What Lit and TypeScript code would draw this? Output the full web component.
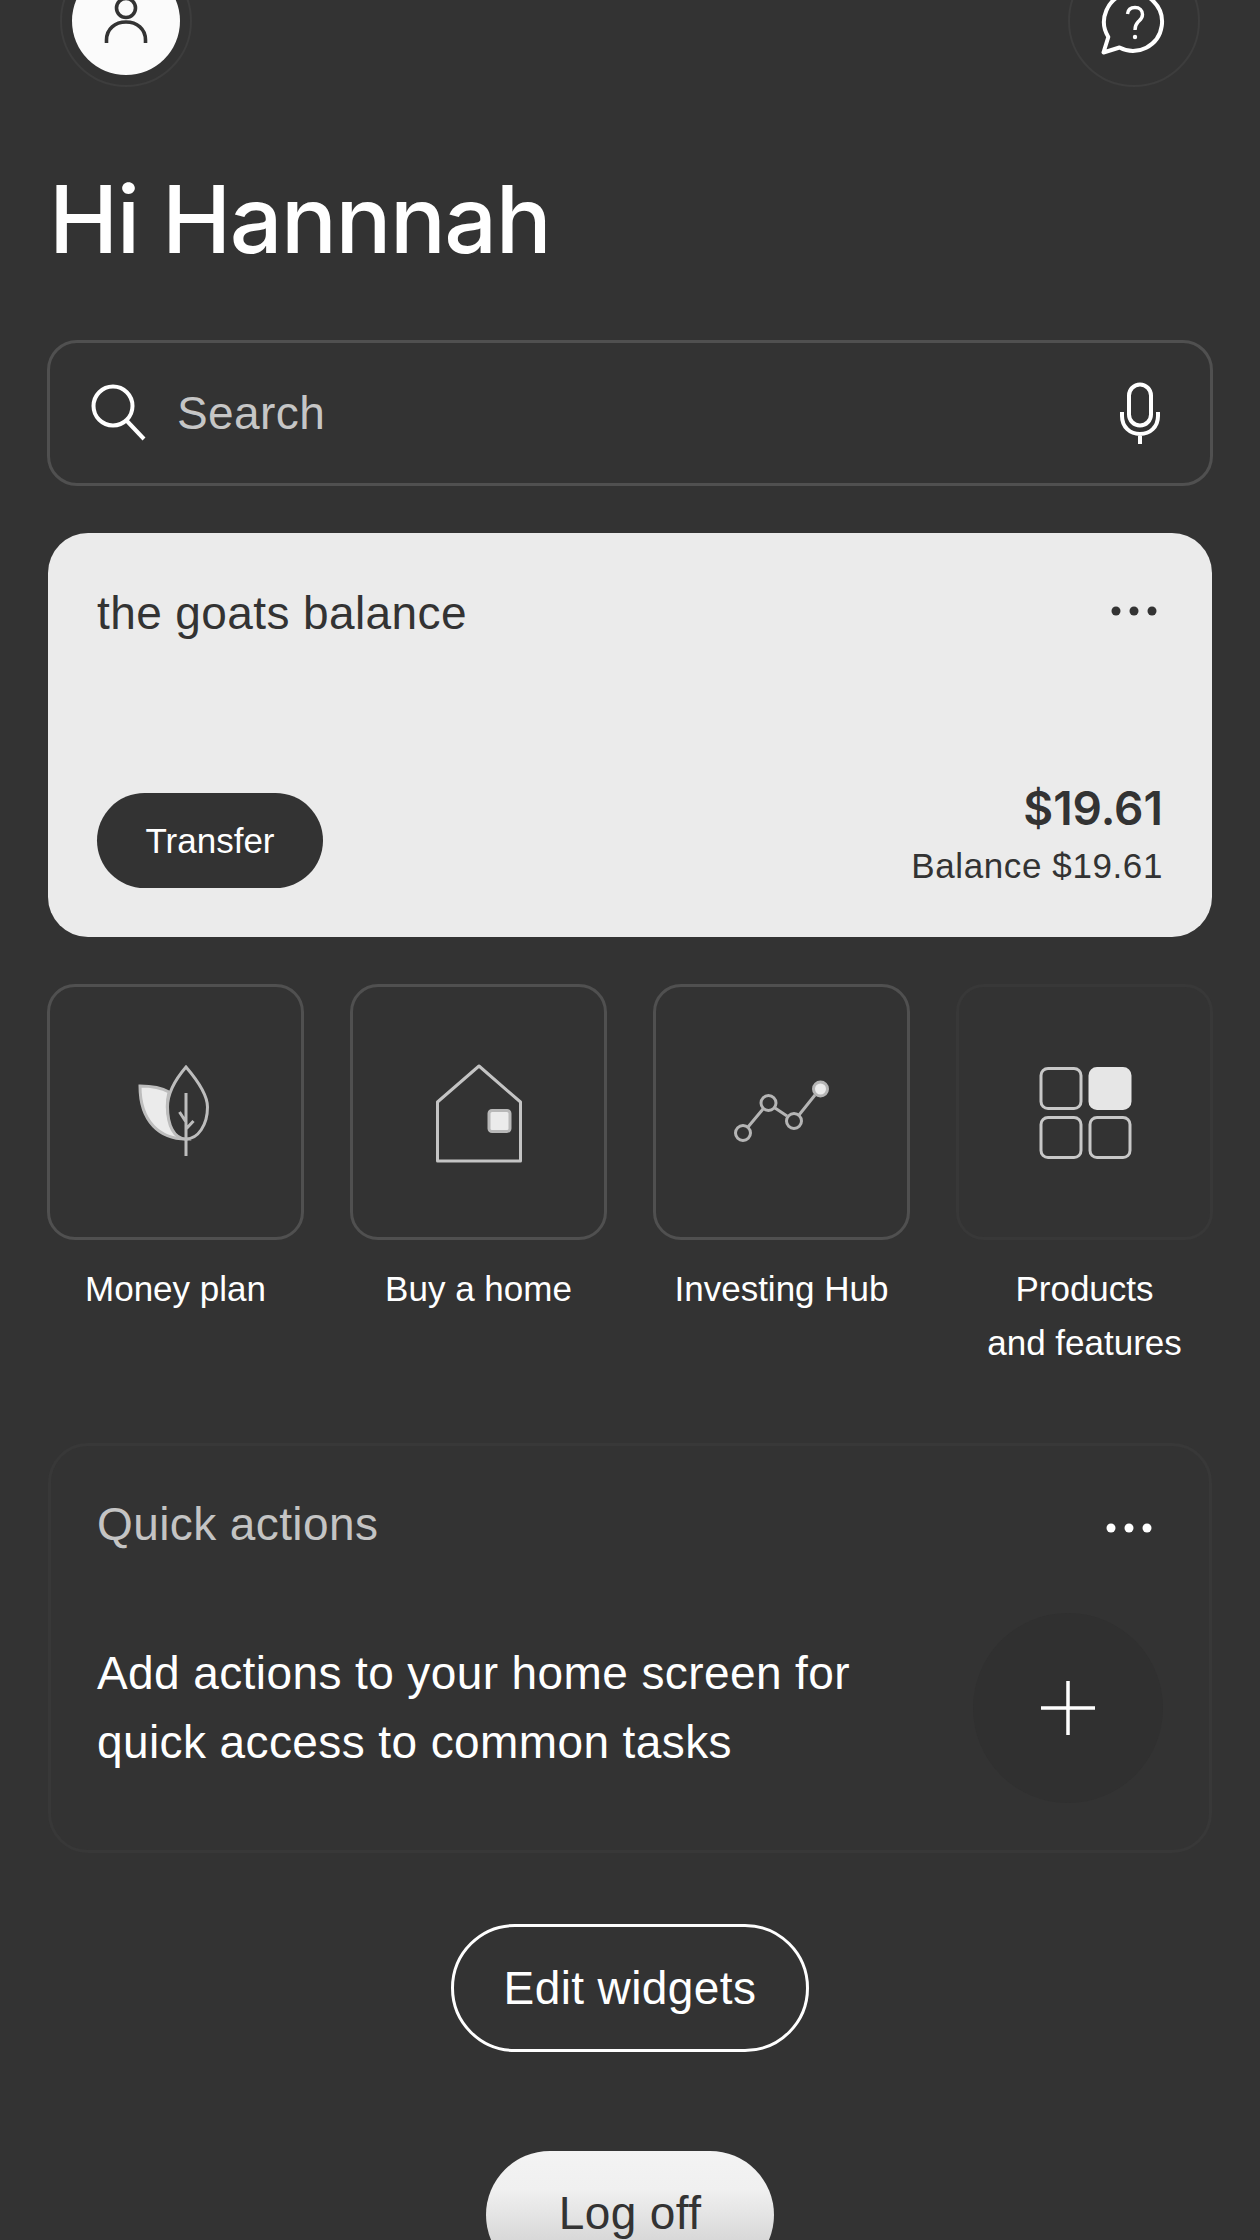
import { LitElement, html, css } from "lit";
import { customElement } from "lit/decorators.js";

const personIcon = html`<svg width="54" height="54" viewBox="0 0 54 54" fill="none" stroke="#333" stroke-width="3.6">
  <circle cx="27" cy="14" r="9.5"></circle>
  <path d="M7.5 49V46C7.5 35 16 28 27 28C38 28 46.5 35 46.5 46V49"></path>
</svg>`;

const helpIcon = html`<svg width="80" height="80" viewBox="0 0 80 80" fill="none" stroke="#fff" stroke-width="4" stroke-linejoin="round">
  <path d="M14.3 56A29 29 0 1 1 25.5 66.5L9.5 71.5Z"></path>
  <path stroke-width="3.4" d="M33.5 33C34 28.5 37 26.5 41 26.5C45.5 26.5 48.5 29.5 48.5 33.5C48.5 37.5 46 39 44 41C42 43 41 44.5 41 49"></path>
  <circle cx="41" cy="56" r="2.2" fill="#fff" stroke="none"></circle>
</svg>`;

const searchIcon = html`<svg class="search-icon" width="60" height="60" viewBox="0 0 60 60" fill="none" stroke="#fff" stroke-width="4">
  <circle cx="24" cy="23" r="19.5"></circle>
  <path d="M37 37L55 56"></path>
</svg>`;

const micIcon = html`<svg width="50" height="70" viewBox="0 0 50 70" fill="none" stroke="#fff" stroke-width="4">
  <rect x="14" y="6.5" width="22" height="41" rx="11"></rect>
  <path d="M7 34V38C7 49 15 56 25 56C35 56 43 49 43 38V34M25 56V66"></path>
</svg>`;

const leafIcon = html`<svg width="100" height="100" viewBox="0 0 100 100" fill="none" stroke="#bdbdbd" stroke-width="3">
  <path fill="#ebebeb" d="M14 24C26 24 36 26 43 30C38 50 44 68 60 77C34 77 14 60 14 24Z"></path>
  <path fill="#333" d="M60 5C72 19 81.5 33 81.5 45C81.5 63 72 77 60 77C48 77 41.5 63 41.5 45C41.5 33 48 19 60 5Z"></path>
  <path d="M60 31V94M53.5 50L60 60M67.5 59L60 67"></path>
</svg>`;

const houseIcon = html`<svg width="110" height="110" viewBox="0 0 110 110" fill="none" stroke="#c4c4c4" stroke-width="3" stroke-linejoin="round">
  <path d="M55 9L13.5 45V104H96.5V45Z"></path>
  <rect x="65" y="53.5" width="21" height="21" rx="3" fill="#ebebeb" stroke="#b8b8b8"></rect>
</svg>`;

const chartIcon = html`<svg width="110" height="110" viewBox="0 0 110 110" fill="none" stroke="#b5b5b5" stroke-width="3">
  <path d="M21 70L36 52M48 51L60 59M72 58L88 38"></path>
  <circle cx="16" cy="76" r="7.5"></circle>
  <circle cx="41.5" cy="46" r="7.5"></circle>
  <circle cx="67" cy="64" r="7.5"></circle>
  <circle cx="93.5" cy="32" r="7" fill="#ebebeb"></circle>
</svg>`;

const gridIcon = html`<svg width="110" height="110" viewBox="0 0 110 110" fill="none" stroke="#c8c8c8" stroke-width="3">
  <rect x="11" y="11.5" width="40" height="40" rx="7"></rect>
  <rect x="60" y="11.5" width="40" height="40" rx="7" fill="#e6e6e6" stroke="#e6e6e6"></rect>
  <rect x="11" y="60.5" width="40" height="40" rx="7"></rect>
  <rect x="60" y="60.5" width="40" height="40" rx="7"></rect>
</svg>`;

const plusIcon = html`<svg width="56" height="56" viewBox="0 0 56 56" fill="none" stroke="#fff" stroke-width="3.5">
  <path d="M28 1V55M1 28H55"></path>
</svg>`;

const dots = (color: string, cls: string) => html`<svg class=${cls} width="46" height="10" viewBox="0 0 46 10" fill=${color}>
  <circle cx="5" cy="5" r="4.5"></circle>
  <circle cx="23" cy="5" r="4.5"></circle>
  <circle cx="41" cy="5" r="4.5"></circle>
</svg>`;

const tiles = [
  { label: html`Money plan`, icon: leafIcon, faint: false },
  { label: html`Buy a home`, icon: houseIcon, faint: false },
  { label: html`Investing Hub`, icon: chartIcon, faint: false },
  { label: html`Products<br />and features`, icon: gridIcon, faint: true },
];

@customElement("app-root")
export class AppRoot extends LitElement {
  static styles = css`
    :host {
      display: block;
      width: 1260px;
      height: 2240px;
      overflow: hidden;
      background: #333;
      color: #fff;
      font-family: "Liberation Sans", Arial, sans-serif;
    }
    .page {
      display: flex;
      flex-direction: column;
      padding: 0 47px;
    }

    /* top bar, cut off by the top of the screen */
    .topbar {
      display: flex;
      justify-content: space-between;
      margin-top: -45px;
      padding: 0 13px;
    }
    .ring {
      width: 132px;
      height: 132px;
      box-sizing: border-box;
      border: 2px solid #3d3d3d;
      border-radius: 50%;
      display: flex;
      align-items: center;
      justify-content: center;
    }
    .avatar {
      width: 108px;
      height: 108px;
      border-radius: 50%;
      background: #fbfbfb;
      display: flex;
      align-items: center;
      justify-content: center;
    }

    h1 {
      margin: 77px 0 66px 0;
      padding-left: 2px;
      font-family: Inter, "Liberation Sans", sans-serif;
      font-size: 93px;
      line-height: 110px;
      font-weight: 500;
      letter-spacing: -1.5px;
    }

    .search {
      height: 146px;
      box-sizing: border-box;
      border: 3px solid #505050;
      border-radius: 30px;
      display: flex;
      align-items: center;
      padding: 0 45px 0 39px;
    }
    .search-icon {
      margin-right: 28px;
    }
    .search-text {
      flex: 1;
      font-size: 46px;
      letter-spacing: 0.4px;
      color: #c6c6c6;
    }

    .balance {
      margin: 47px 1px 0 1px;
      height: 404px;
      box-sizing: border-box;
      padding: 52px 49px 49px 49px;
      border-radius: 40px;
      background: #ebebeb;
      color: #333;
      display: flex;
      flex-direction: column;
      justify-content: space-between;
    }
    .balance-head {
      display: flex;
      justify-content: space-between;
      align-items: center;
      font-size: 46px;
      line-height: 56px;
      letter-spacing: 0.4px;
    }
    .balance-dots {
      margin: 0 6px 4px 0;
    }
    .balance-foot {
      display: flex;
      justify-content: space-between;
      align-items: flex-end;
    }
    .transfer {
      width: 226px;
      height: 95px;
      border-radius: 48px;
      background: #333;
      color: #fff;
      display: flex;
      align-items: center;
      justify-content: center;
      font-size: 35px;
    }
    .amounts {
      text-align: right;
    }
    .amount {
      font-family: Inter, "Liberation Sans", sans-serif;
      font-size: 46px;
      line-height: 54px;
      font-weight: 600;
    }
    .available {
      margin-top: 9px;
      font-size: 35px;
      line-height: 44px;
      letter-spacing: 0.6px;
    }

    .tiles {
      margin-top: 47px;
      display: grid;
      grid-template-columns: repeat(4, 257px);
      column-gap: 46px;
    }
    .tile {
      height: 256px;
      box-sizing: border-box;
      border: 3px solid #505050;
      border-radius: 28px;
      display: flex;
      align-items: center;
      justify-content: center;
    }
    .tile.faint {
      border-color: #383838;
    }
    .tile-label {
      margin-top: 22px;
      text-align: center;
      font-size: 35px;
      line-height: 54px;
    }

    .quick {
      margin: 73px 1px 0 1px;
      height: 410px;
      box-sizing: border-box;
      border: 3px solid #383838;
      border-radius: 40px;
      padding: 50px 46px 0 46px;
    }
    .quick-head {
      display: flex;
      justify-content: space-between;
      align-items: center;
      font-size: 46px;
      line-height: 56px;
      letter-spacing: 0.4px;
      color: #c4c4c4;
    }
    .quick-dots {
      margin: 8px 11px 0 0;
    }
    .quick-body {
      margin-top: 61px;
      display: flex;
      justify-content: space-between;
      align-items: center;
      font-size: 46px;
      line-height: 69px;
      letter-spacing: 0.4px;
    }
    .add {
      width: 190px;
      height: 190px;
      border-radius: 50%;
      background: #303030;
      display: flex;
      align-items: center;
      justify-content: center;
    }

    .edit {
      align-self: center;
      margin-top: 71px;
      width: 358px;
      height: 128px;
      box-sizing: border-box;
      border: 3px solid #fff;
      border-radius: 64px;
      display: flex;
      align-items: center;
      justify-content: center;
      font-size: 46px;
      letter-spacing: 0.4px;
    }
    .logoff {
      align-self: center;
      margin-top: 99px;
      width: 288px;
      height: 128px;
      box-sizing: border-box;
      padding-bottom: 4px;
      border-radius: 64px;
      background: linear-gradient(#f3f3f3 0%, #f0f0f0 30%, #d8d8d8 70%);
      color: #333;
      display: flex;
      align-items: center;
      justify-content: center;
      font-size: 46px;
      letter-spacing: 0.4px;
    }
  `;

  render() {
    return html`
      <div class="page">
        <div class="topbar">
          <div class="ring"><div class="avatar">${personIcon}</div></div>
          <div class="ring">${helpIcon}</div>
        </div>

        <h1>Hi Hannnah</h1>

        <div class="search">
          ${searchIcon}
          <span class="search-text">Search</span>
          ${micIcon}
        </div>

        <section class="balance">
          <div class="balance-head">
            <span>the goats balance</span>
            ${dots("#333", "balance-dots")}
          </div>
          <div class="balance-foot">
            <div class="transfer">Transfer</div>
            <div class="amounts">
              <div class="amount">$19.61</div>
              <div class="available">Balance $19.61</div>
            </div>
          </div>
        </section>

        <div class="tiles">
          ${tiles.map(
            (t) => html`
              <div>
                <div class="tile ${t.faint ? "faint" : ""}">${t.icon}</div>
                <div class="tile-label">${t.label}</div>
              </div>
            `
          )}
        </div>

        <section class="quick">
          <div class="quick-head">
            <span>Quick actions</span>
            ${dots("#fff", "quick-dots")}
          </div>
          <div class="quick-body">
            <span>Add actions to your home screen for<br />quick access to common tasks</span>
            <div class="add">${plusIcon}</div>
          </div>
        </section>

        <div class="edit">Edit widgets</div>
        <div class="logoff">Log off</div>
      </div>
    `;
  }
}
